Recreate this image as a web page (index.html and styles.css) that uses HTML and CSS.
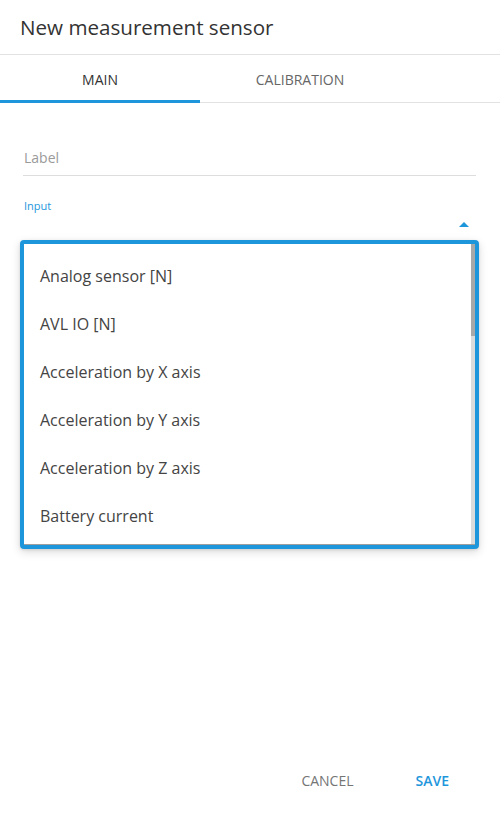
FILE: index.html
```html
<!DOCTYPE html>
<html>
<head>
<meta charset="utf-8">
<link rel="stylesheet" href="styles.css">
</head>
<body>
<div class="dialog">
  <div class="header">New measurement sensor</div>
  <div class="tabs">
    <div class="tab active">Main</div>
    <div class="tab">Calibration</div>
  </div>
  <div class="content">
    <div class="field">
      <div class="placeholder">Label</div>
    </div>
    <div class="select">
      <div class="select-label">Input</div>
      <div class="select-row"><span class="arrow"></span></div>
      <div class="menu">
        <div class="menu-inner">
          <ul class="options">
            <li>Analog sensor [N]</li>
            <li>AVL IO [N]</li>
            <li>Acceleration by X axis</li>
            <li>Acceleration by Y axis</li>
            <li>Acceleration by Z axis</li>
            <li>Battery current</li>
          </ul>
          <div class="scrollbar"><div class="thumb"></div></div>
        </div>
      </div>
    </div>
  </div>
  <div class="footer">
    <button class="btn cancel">Cancel</button>
    <button class="btn save">Save</button>
  </div>
</div>
</body>
</html>
```
FILE: styles.css
```css
* { box-sizing: border-box; }
html, body { margin: 0; padding: 0; background: #fff; }
body { font-family: "Open Sans", "Liberation Sans", sans-serif; color: #333; }

.dialog {
  width: 500px;
  height: 820px;
  display: flex;
  flex-direction: column;
}

.header {
  height: 55px;
  padding: 13px 20px 0;
  font-size: 20.6px;
  line-height: 28px;
  color: #333;
  border-bottom: 1px solid #e2e2e2;
}

.tabs {
  display: grid;
  grid-template-columns: 200px 200px;
  height: 48px;
  border-bottom: 1px solid #e2e2e2;
}
.tab {
  display: flex;
  align-items: center;
  justify-content: center;
  text-transform: uppercase;
  font-size: 14px;
  color: #666;
  padding-top: 3px;
  border-bottom: 3px solid transparent;
  margin-bottom: -1px;
}
.tab.active {
  color: #333;
  border-bottom-color: #1e96dc;
}

.content {
  flex: 1;
  padding: 0 24px 0 23px;
  position: relative;
}

.field {
  margin-top: 40px;
  height: 33px;
  border-bottom: 1px solid #ddd;
}
.placeholder {
  font-size: 14px;
  line-height: 30px;
  color: #9a9a9a;
  padding-left: 1px;
}

.select {
  position: relative;
  margin-top: 22px;
}
.select-label {
  font-size: 11px;
  line-height: 16px;
  color: #1e96dc;
  padding-left: 1px;
}
.select-row {
  height: 20px;
  display: flex;
  justify-content: flex-end;
  align-items: center;
  padding-right: 7px;
}
.arrow {
  width: 0;
  height: 0;
  border-left: 5px solid transparent;
  border-right: 5px solid transparent;
  border-bottom: 5px solid #1e96dc;
}

.menu {
  position: absolute;
  left: -3px;
  top: 42px;
  width: 459px;
  height: 309px;
  border: 4px solid #1e96dc;
  border-radius: 4px;
  background: #fff;
  box-shadow: 0 3px 10px rgba(0,0,0,0.14), 0 1px 3px rgba(0,0,0,0.1);
}
.menu-inner {
  height: 100%;
  display: flex;
  border-bottom: 1px solid #9e9e9e;
  overflow: hidden;
}
.options {
  flex: 1;
  list-style: none;
  margin: 0;
  padding: 8px 0 0;
}
.options li {
  height: 48px;
  line-height: 48px;
  padding-left: 16px;
  font-size: 16px;
  color: #444;
}
.scrollbar {
  width: 4px;
  background: #dcdcdc;
}
.thumb {
  height: 92px;
  background: #a9a9a9;
}

.footer {
  height: 78px;
  display: flex;
  justify-content: flex-end;
  align-items: center;
  padding-right: 51px;
  gap: 62px;
}
.btn {
  font-family: "Open Sans", "Liberation Sans", sans-serif;
  background: none;
  border: 0;
  padding: 0;
  font-size: 14px;
  line-height: 20px;
  text-transform: uppercase;
  cursor: pointer;
}
.cancel { color: #757575; }
.save { color: #1e96dc; font-weight: 600; }
```
